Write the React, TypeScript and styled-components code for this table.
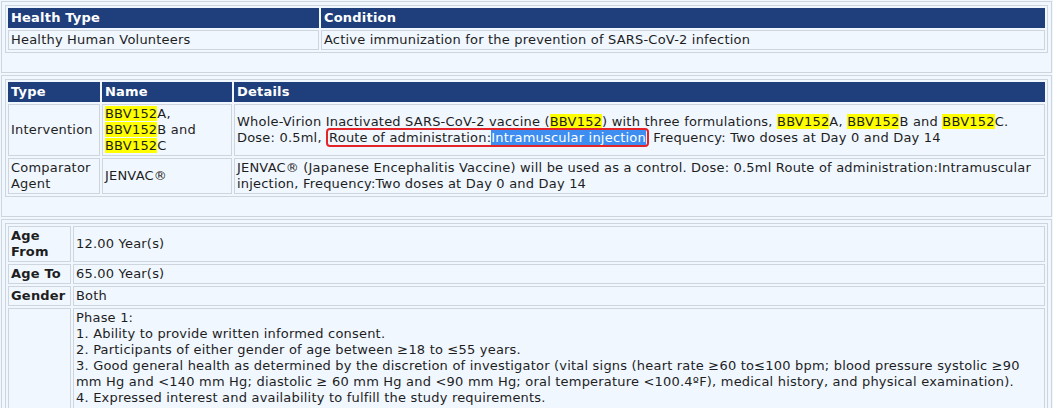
import React from "react";
import { styled, createGlobalStyle } from "styled-components";

const GlobalStyle = createGlobalStyle`
    body {
        margin: 0;
        background: #f0f7ff;
        font-family: "DejaVu Sans", Verdana, sans-serif;
        font-size: 13px;
        line-height: 16px;
        letter-spacing: 0.2px;
        color: #1e1e1e;
    }
`;

const Page = styled.div`
    display: flex;
    flex-direction: column;
    gap: 2px;
    padding: 1px 1px 0 1px;
`;

const Section = styled.div`
    border: 1px solid #cfd5dc;
    padding: 3px 3px 19px;
`;

const DataTable = styled.table`
    width: 100%;
    border: 1px solid #cfd5dc;
    border-collapse: separate;
    border-spacing: 2px;
    table-layout: fixed;
`;

const HeadCell = styled.th<{ $width?: number }>`
    box-sizing: border-box;
    background: #1f3f7c;
    border: 1px solid #1f3f7c;
    color: #fff;
    font-weight: bold;
    text-align: left;
    padding: 1px 2px;
    width: ${(p) => (p.$width ? `${p.$width}px` : "auto")};
`;

const Cell = styled.td<{ $width?: number; $label?: boolean; $top?: boolean }>`
    box-sizing: border-box;
    border: 1px solid #cfd5dc;
    padding: 1px 2px;
    vertical-align: ${(p) => (p.$top ? "top" : "middle")};
    font-weight: ${(p) => (p.$label ? "bold" : "normal")};
    width: ${(p) => (p.$width ? `${p.$width}px` : "auto")};
`;

const Mark = styled.span`
    background: #ffff00;
`;

const Boxed = styled.span`
    border: 2px solid #e5242a;
    border-radius: 4px;
    padding: 0 1px;
`;

const Selected = styled.span`
    background: #3d8ef0;
    color: #fff;
`;

const Code = () => <Mark>BBV152</Mark>;

export default function App() {
    return (
        <>
            <GlobalStyle />
            <Page>
                <Section>
                    <DataTable>
                        <thead>
                            <tr>
                                <HeadCell $width={311}>Health Type</HeadCell>
                                <HeadCell>Condition</HeadCell>
                            </tr>
                        </thead>
                        <tbody>
                            <tr>
                                <Cell>Healthy Human Volunteers</Cell>
                                <Cell>Active immunization for the prevention of SARS-CoV-2 infection</Cell>
                            </tr>
                        </tbody>
                    </DataTable>
                </Section>

                <Section>
                    <DataTable>
                        <thead>
                            <tr>
                                <HeadCell $width={92}>Type</HeadCell>
                                <HeadCell $width={130}>Name</HeadCell>
                                <HeadCell>Details</HeadCell>
                            </tr>
                        </thead>
                        <tbody>
                            <tr>
                                <Cell>Intervention</Cell>
                                <Cell>
                                    <Code />A,
                                    <br />
                                    <Code />B and
                                    <br />
                                    <Code />C
                                </Cell>
                                <Cell>
                                    Whole-Virion Inactivated SARS-CoV-2 vaccine (<Code />) with three formulations,{" "}
                                    <Code />A, <Code />B and <Code />C.
                                    <br />
                                    Dose: 0.5ml,{" "}
                                    <Boxed>
                                        Route of administration:<Selected>Intramuscular injection</Selected>
                                    </Boxed>{" "}
                                    Frequency: Two doses at Day 0 and Day 14
                                </Cell>
                            </tr>
                            <tr>
                                <Cell>Comparator Agent</Cell>
                                <Cell>JENVAC®</Cell>
                                <Cell>
                                    JENVAC® (Japanese Encephalitis Vaccine) will be used as a control. Dose: 0.5ml Route
                                    of administration:Intramuscular injection, Frequency:Two doses at Day 0 and Day 14
                                </Cell>
                            </tr>
                        </tbody>
                    </DataTable>
                </Section>

                <Section>
                    <DataTable>
                        <tbody>
                            <tr>
                                <Cell $width={63} $label>Age From</Cell>
                                <Cell>12.00 Year(s)</Cell>
                            </tr>
                            <tr>
                                <Cell $label>Age To</Cell>
                                <Cell>65.00 Year(s)</Cell>
                            </tr>
                            <tr>
                                <Cell $label>Gender</Cell>
                                <Cell>Both</Cell>
                            </tr>
                            <tr>
                                <Cell $label></Cell>
                                <Cell $top>
                                    Phase 1:
                                    <br />
                                    1. Ability to provide written informed consent.
                                    <br />
                                    2. Participants of either gender of age between ≥18 to ≤55 years.
                                    <br />
                                    3. Good general health as determined by the discretion of investigator (vital signs
                                    (heart rate ≥60 to≤100 bpm; blood pressure systolic ≥90
                                    <br />
                                    mm Hg and &lt;140 mm Hg; diastolic ≥ 60 mm Hg and &lt;90 mm Hg; oral temperature
                                    &lt;100.4ºF), medical history, and physical examination).
                                    <br />
                                    4. Expressed interest and availability to fulfill the study requirements.
                                    <br />
                                    5. Agree for female participants of child bearing potential who would use an
                                    acceptable method of contraception for the duration of the study.
                                </Cell>
                            </tr>
                        </tbody>
                    </DataTable>
                </Section>
            </Page>
        </>
    );
}
